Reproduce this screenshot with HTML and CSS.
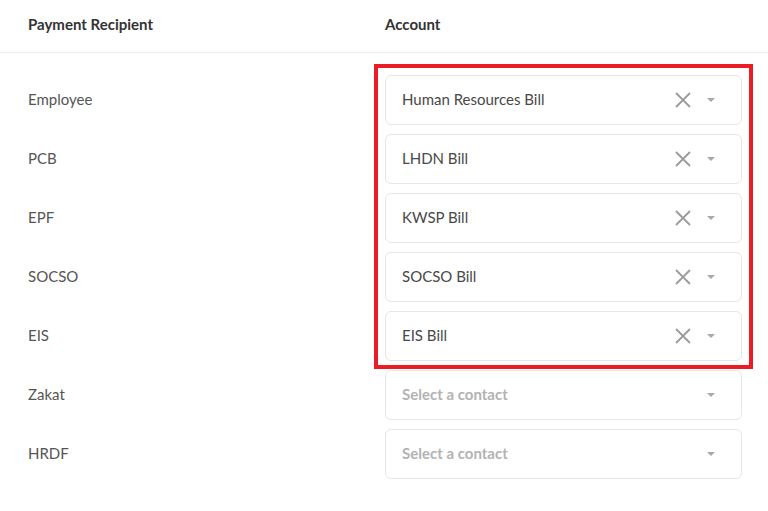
FILE: index.html
```html
<!DOCTYPE html>
<html lang="en">
<head>
<meta charset="utf-8">
<title>Payment Recipients</title>
<link rel="stylesheet" href="styles.css">
</head>
<body>
<div class="page">
  <div class="head">
    <div class="col-left">Payment Recipient</div>
    <div class="col-right">Account</div>
  </div>
  <div class="rows">
    <div class="row"><div class="col-left label">Employee</div><div class="col-right"><div class="select"><span class="value">Human Resources Bill</span><span class="clear"><svg width="16" height="16" viewBox="0 0 16 16"><path d="M1 1L15 15M15 1L1 15" stroke="#9b9b9b" stroke-width="1.8" fill="none"/></svg></span><span class="caret"></span></div></div></div>
    <div class="row"><div class="col-left label">PCB</div><div class="col-right"><div class="select"><span class="value">LHDN Bill</span><span class="clear"><svg width="16" height="16" viewBox="0 0 16 16"><path d="M1 1L15 15M15 1L1 15" stroke="#9b9b9b" stroke-width="1.8" fill="none"/></svg></span><span class="caret"></span></div></div></div>
    <div class="row"><div class="col-left label">EPF</div><div class="col-right"><div class="select"><span class="value">KWSP Bill</span><span class="clear"><svg width="16" height="16" viewBox="0 0 16 16"><path d="M1 1L15 15M15 1L1 15" stroke="#9b9b9b" stroke-width="1.8" fill="none"/></svg></span><span class="caret"></span></div></div></div>
    <div class="row"><div class="col-left label">SOCSO</div><div class="col-right"><div class="select"><span class="value">SOCSO Bill</span><span class="clear"><svg width="16" height="16" viewBox="0 0 16 16"><path d="M1 1L15 15M15 1L1 15" stroke="#9b9b9b" stroke-width="1.8" fill="none"/></svg></span><span class="caret"></span></div></div></div>
    <div class="row"><div class="col-left label">EIS</div><div class="col-right"><div class="select"><span class="value">EIS Bill</span><span class="clear"><svg width="16" height="16" viewBox="0 0 16 16"><path d="M1 1L15 15M15 1L1 15" stroke="#9b9b9b" stroke-width="1.8" fill="none"/></svg></span><span class="caret"></span></div></div></div>
    <div class="row"><div class="col-left label">Zakat</div><div class="col-right"><div class="select"><span class="placeholder">Select a contact</span><span class="caret"></span></div></div></div>
    <div class="row"><div class="col-left label">HRDF</div><div class="col-right"><div class="select"><span class="placeholder">Select a contact</span><span class="caret"></span></div></div></div>
    <div class="highlight"></div>
  </div>
</div>
</body>
</html>
```
FILE: styles.css
```css
* { box-sizing: border-box; }
html, body { margin: 0; padding: 0; background: #ffffff; }
body { font-family: Lato, "Noto Sans", sans-serif; font-size: 15px; color: #444; }
.page { width: 768px; height: 511px; overflow: hidden; }
.head {
  display: flex;
  align-items: center;
  height: 53px;
  border-bottom: 1px solid #ececec;
  font-weight: 700;
  color: #333;
  padding-bottom: 5px;
}
.col-left { width: 385px; padding-left: 28px; }
.col-right { width: 357px; }
.rows {
  position: relative;
  display: flex;
  flex-direction: column;
  gap: 9px;
  padding-top: 22px;
}
.row { display: flex; align-items: center; height: 50px; }
.label { color: #555; padding-bottom: 3px; }
.select {
  display: flex;
  align-items: center;
  height: 50px;
  border: 1px solid #e6e6e6;
  border-radius: 6px;
  padding: 0 26px 2px 16px;
}
.value { flex: 1; color: #484848; }
.placeholder { flex: 1; color: #b3b3b3; font-weight: 700; }
.clear { display: flex; width: 16px; height: 16px; margin-right: 16px; margin-top: 2px; }
.caret {
  width: 0; height: 0;
  margin-top: 2px;
  border-left: 4.5px solid transparent;
  border-right: 4.5px solid transparent;
  border-top: 4.5px solid #a8a8a8;
}
.highlight {
  position: absolute;
  left: 374px;
  top: 11px;
  width: 379px;
  height: 305px;
  border: 4px solid #ec1c24;
}
```
